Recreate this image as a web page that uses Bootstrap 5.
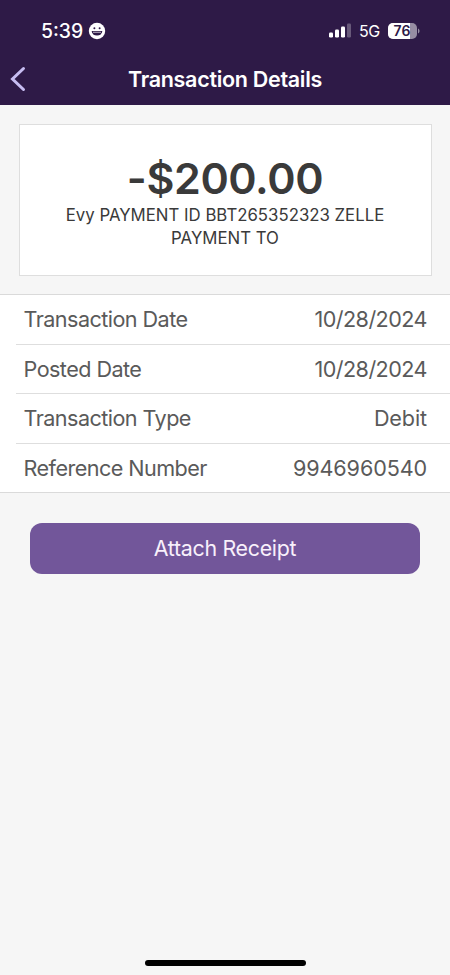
<!DOCTYPE html>
<html lang="en">
<head>
<meta charset="utf-8">
<meta name="viewport" content="width=device-width, initial-scale=1">
<title>Transaction Details</title>
<link href="https://cdn.jsdelivr.net/npm/bootstrap@5.3.0/dist/css/bootstrap.min.css" rel="stylesheet">
<style>
body { font-family: Inter, Roboto, sans-serif; background: #f6f6f6; color: #3a3a3a; }
.screen { height: 975px; }
.app-top { background: #2e1a47; height: 105px; }
.status-bar { height: 53px; padding: 9px 30px 0 41px; }
.clock { font-size: 19.4px; font-weight: 500; letter-spacing: 0; line-height: 22px; }
.face { margin-left: 5px; }
.network { font-size: 16px; line-height: 20px; letter-spacing: -.3px; }
.title-bar { height: 52px; }
.back-link { width: 36px; margin-right: -36px; padding-left: 9px; }
.page-title { font-size: 21.5px; font-weight: 600; letter-spacing: -.3px; line-height: 26px; }
.summary { margin: 19px 18.5px 0; height: 152px; border: 1.5px solid #dedede; padding-top: 28px; }
.amount { font-size: 43px; font-weight: 600; line-height: 50px; letter-spacing: -.4px; padding-bottom: 1px; }
.memo { font-size: 16.8px; line-height: 23px; }
.details { margin-top: 18px; border-top: 1.4px solid #dadada; border-bottom: 1.4px solid #dadada; font-size: 21.6px; color: #5a5a5a; }
.detail-row { margin-left: 16px; padding: 0 23px 0 7.5px; height: 49.6px; border-bottom: 1.4px solid #dedede; line-height: 26px; }
.detail-row:last-child { border-bottom: 0; height: 48.5px; }
.label { letter-spacing: -.55px; }
.value { letter-spacing: -.12px; }
.value-date { letter-spacing: -.55px; }
.attach { margin: 30px 30px 0; height: 51px; border-radius: 12px; background: #72569a; font-size: 21.4px; letter-spacing: -.3px; padding: 0 0 2px; --bs-btn-color: #f8f0fb; --bs-btn-hover-color: #fff; }
.home-bar { width: 161px; height: 6px; margin-bottom: 9px; }
</style>
</head>
<body>
<div class="screen d-flex flex-column overflow-hidden">
  <header class="app-top text-white">
    <div class="status-bar d-flex align-items-center justify-content-between">
      <div class="d-flex align-items-center">
        <span class="clock">5:39</span>
        <svg class="face" width="18" height="18" viewBox="0 0 18 18" aria-hidden="true">
          <circle cx="9" cy="9" r="8.2" fill="#fff"/>
          <circle cx="6.400" cy="6.300" r="1" fill="#2e1a47"/><circle cx="11.600" cy="6.300" r="1" fill="#2e1a47"/>
          <path d="M3.700 9h10.600a5.300 4.600 0 0 1-10.600 0z" fill="#2e1a47"/>
          <path d="M5 10.300h8" stroke="#a79fb2" stroke-width="1.200"/>
        </svg>
      </div>
      <div class="d-flex align-items-center">
        <svg width="22" height="16" viewBox="0 0 22 16" fill="#fff" aria-hidden="true">
          <rect x="0" y="9.500" width="4" height="5" rx="1.200"/><rect x="6" y="6.500" width="4" height="8" rx="1.200"/>
          <rect x="12" y="3.500" width="4" height="11" rx="1.200"/><rect x="18" y="0.500" width="4" height="14" rx="1.200" opacity=".28"/>
        </svg>
        <span class="network ms-2">5G</span>
        <svg class="ms-2" width="32" height="18" viewBox="0 0 32 18" aria-hidden="true">
          <rect x="0" y="1" width="29" height="16" rx="5" fill="#978da3"/>
          <path d="M5 1h17v16H5a5 5 0 0 1-5-5V6a5 5 0 0 1 5-5z" fill="#fff"/>
          <path d="M30 6.500c2 .7 2 4.300 0 5z" fill="#978da3"/>
          <text x="14" y="14" text-anchor="middle" font-family="Inter" font-size="14" font-weight="600" fill="#2e1a47">76</text>
        </svg>
      </div>
    </div>
    <div class="title-bar d-flex align-items-center">
      <a class="back-link" href="#" aria-label="Back">
        <svg class="d-block" width="18" height="26" viewBox="0 0 18 26" fill="none" stroke="#c7bdf2" stroke-width="3" stroke-linecap="round"><path d="M14.500 2.500L3.500 13l11 10.500"/></svg>
      </a>
      <h1 class="page-title flex-grow-1 text-center mb-0">Transaction Details</h1>
    </div>
  </header>
  <main>
    <section class="summary bg-white text-center">
      <div class="amount">-$200.00</div>
      <div class="memo">Evy PAYMENT ID BBT265352323 ZELLE<br>PAYMENT TO</div>
    </section>
    <section class="details bg-white">
      <div class="detail-row d-flex align-items-center justify-content-between"><span class="label">Transaction Date</span><span class="value-date">10/28/2024</span></div>
      <div class="detail-row d-flex align-items-center justify-content-between"><span class="label">Posted Date</span><span class="value-date">10/28/2024</span></div>
      <div class="detail-row d-flex align-items-center justify-content-between"><span class="label">Transaction Type</span><span class="value">Debit</span></div>
      <div class="detail-row d-flex align-items-center justify-content-between"><span class="label">Reference Number</span><span class="value">9946960540</span></div>
    </section>
    <div class="d-grid"><button class="attach btn border-0" type="button">Attach Receipt</button></div>
  </main>
  <div class="home-bar bg-black rounded-pill mt-auto mx-auto"></div>
</div>
<script src="https://cdn.jsdelivr.net/npm/bootstrap@5.3.0/dist/js/bootstrap.bundle.min.js"></script>
</body>
</html>
